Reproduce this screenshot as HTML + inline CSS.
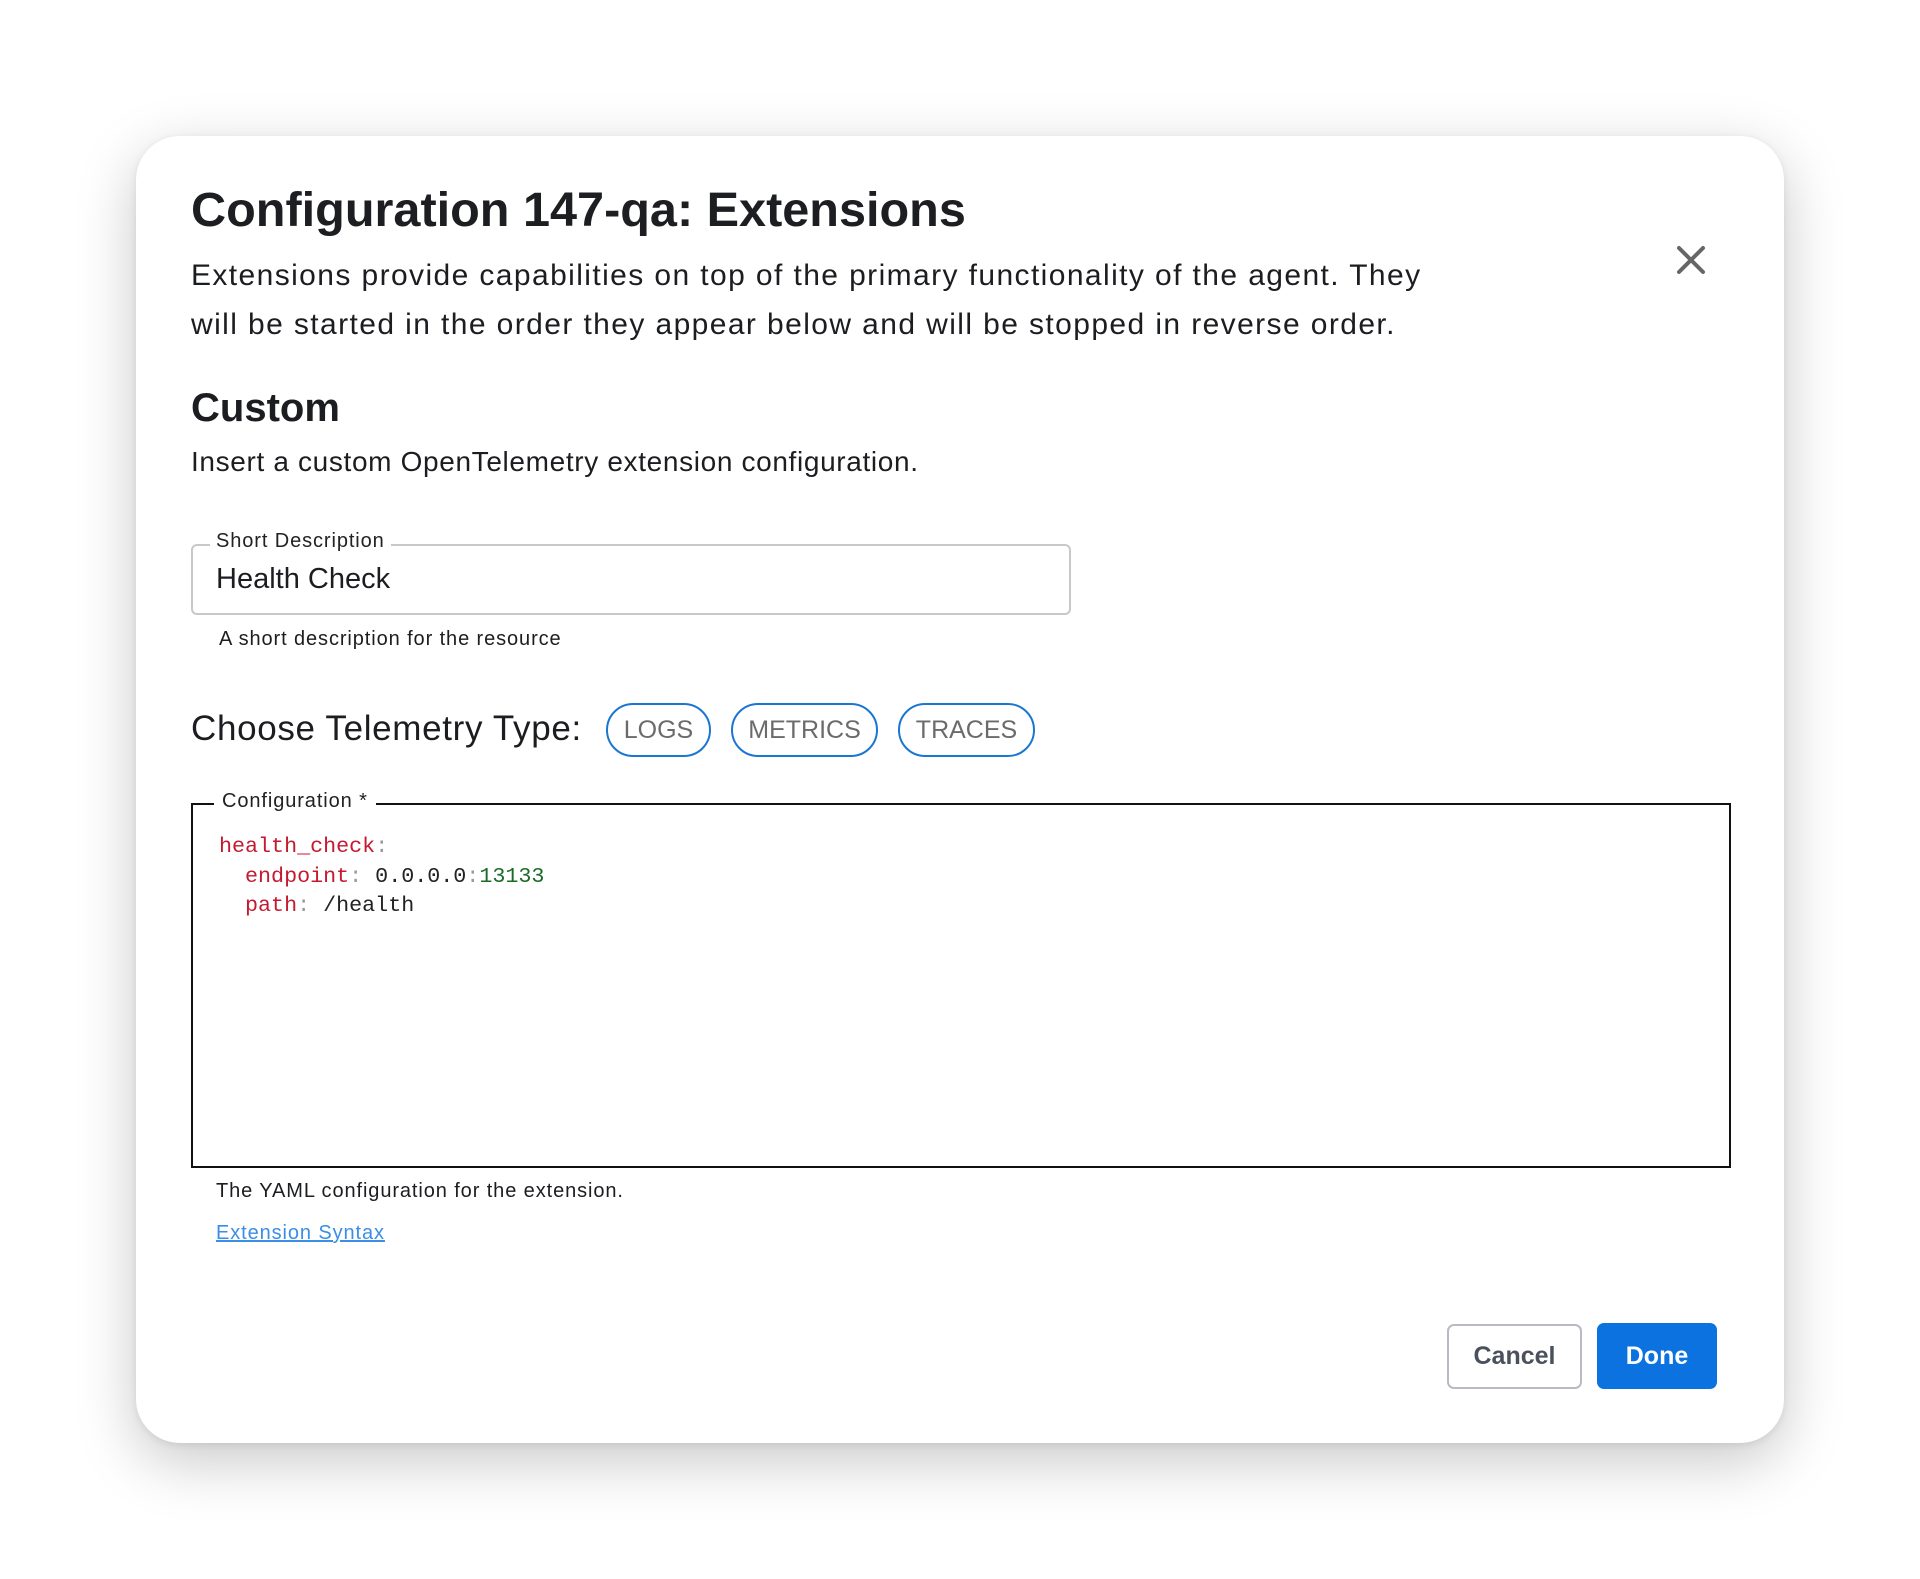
<!DOCTYPE html>
<html><head><meta charset="utf-8"><style>
*{box-sizing:border-box;margin:0;padding:0}
body{width:1920px;height:1579px;background:#fff;font-family:"Liberation Sans",sans-serif;color:#1c1d20;position:relative;overflow:hidden}
.card{position:absolute;left:136px;top:136px;width:1648px;height:1307px;background:#fff;border-radius:44px;box-shadow:0 18px 60px rgba(0,0,0,0.22),0 2px 8px rgba(0,0,0,0.08)}
.a{position:absolute;white-space:nowrap}
.chip{position:absolute;top:703px;height:54px;border:2px solid #1976d2;border-radius:27px;color:#6b6b6b;font-size:25px;display:flex;align-items:center;justify-content:center}
.code{font-family:"Liberation Mono",monospace;font-size:21.7px;color:#222}
.k{color:#c41a30}.p{color:#999}.n{color:#1a6b2a}
.s{font-size:20px;letter-spacing:0.9px}
</style></head><body>
<div class="card"></div>
<div class="a" style="left:191px;top:182px;font-size:48.6px;font-weight:bold;color:#1d1e21">Configuration 147-qa: Extensions</div>
<div class="a" style="left:191px;top:251px;font-size:30px;line-height:49px;letter-spacing:1.4px">Extensions provide capabilities on top of the primary functionality of the agent. They<br>will be started in the order they appear below and will be stopped in reverse order.</div>
<svg class="a" style="left:1675px;top:244px" width="32" height="32" viewBox="0 0 32 32"><path d="M4 4L28 28M28 4L4 28" stroke="#666" stroke-width="4" stroke-linecap="round"/></svg>
<div class="a" style="left:191px;top:386px;font-size:40px;font-weight:bold">Custom</div>
<div class="a" style="left:191px;top:446px;font-size:28px;letter-spacing:0.65px">Insert a custom OpenTelemetry extension configuration.</div>
<div class="a" style="left:191px;top:544px;width:880px;height:71px;border:2px solid #c8c8c8;border-radius:6px"></div>
<div class="a s" style="left:210px;top:530px;padding:0 6px;background:#fff;color:#222">Short Description</div>
<div class="a" style="left:216px;top:563px;font-size:29px">Health Check</div>
<div class="a s" style="left:219px;top:628px">A short description for the resource</div>
<div class="a" style="left:191px;top:709px;font-size:35px;letter-spacing:0.67px">Choose Telemetry Type:</div>
<div class="chip" style="left:606px;width:105px">LOGS</div>
<div class="chip" style="left:731px;width:147px">METRICS</div>
<div class="chip" style="left:898px;width:137px">TRACES</div>
<div class="a" style="left:191px;top:803px;width:1540px;height:365px;border:2px solid #111"></div>
<div class="a s" style="left:214px;top:790px;padding:0 8px;background:#fff;color:#222">Configuration *</div>
<div class="a code" style="left:219px;top:832px;line-height:29.5px">
<span class="k">health_check</span><span class="p">:</span><br>
&nbsp;&nbsp;<span class="k">endpoint</span><span class="p">:</span> 0.0.0.0<span class="p">:</span><span class="n">13133</span><br>
&nbsp;&nbsp;<span class="k">path</span><span class="p">:</span> /health</div>
<div class="a s" style="left:216px;top:1180px">The YAML configuration for the extension.</div>
<div class="a s" style="left:216px;top:1222px;color:#3b8ee6;text-decoration:underline">Extension Syntax</div>
<div class="a" style="left:1447px;top:1324px;width:135px;height:65px;border:2px solid #b8bcc2;border-radius:7px;font-size:25px;font-weight:bold;color:#4a505c;display:flex;align-items:center;justify-content:center">Cancel</div>
<div class="a" style="left:1597px;top:1323px;width:120px;height:66px;background:#0b72e0;border-radius:7px;font-size:25px;font-weight:bold;color:#fff;display:flex;align-items:center;justify-content:center">Done</div>
</body></html>
